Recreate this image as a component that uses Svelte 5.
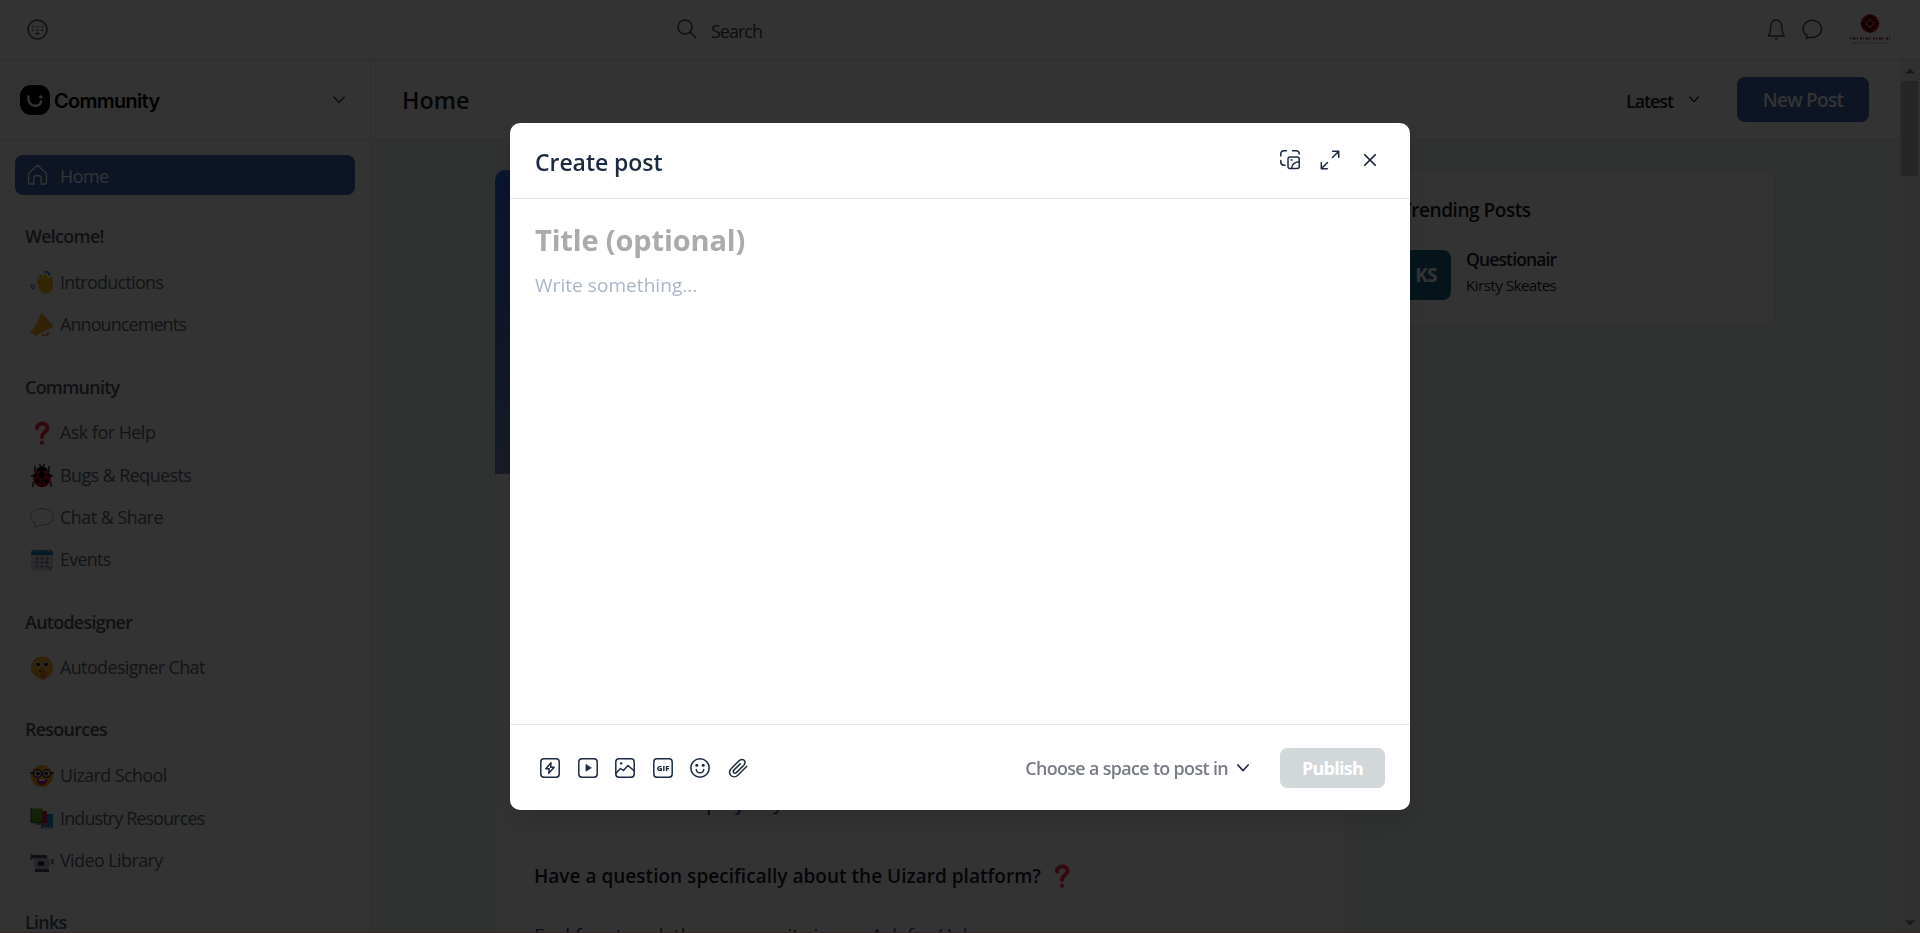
<script>
  // Each item: icon, label, tracking in px
  const sections = [
    { title: 'Welcome!', items: [['wave', 'Introductions', -0.68], ['horn', 'Announcements', -0.86]] },
    { title: 'Community', items: [['question', 'Ask for Help', -0.5], ['bug', 'Bugs & Requests', -0.55], ['bubble', 'Chat & Share', -0.5], ['calendar', 'Events', -0.7]] },
    { title: 'Autodesigner', items: [['shush', 'Autodesigner Chat', -0.59]] },
    { title: 'Resources', items: [['nerd', 'Uizard School', -0.58], ['books', 'Industry Resources', -0.84], ['camera', 'Video Library', -0.55]] },
    { title: 'Links', items: [] }
  ];
  const tools = ['bolt', 'play', 'image', 'gif', 'smile', 'clip'];
</script>

{#snippet emoji(name)}
  <svg class="emoji" viewBox="0 0 24 24">
    {#if name === 'wave'}
      <g stroke="#f9c21b" stroke-width="3.300" stroke-linecap="round"><path d="M14.500 14 8.500 8.500M16 12l-5.500-7M18 11l-3-6.500M13 16l-5-4.500" /></g>
      <path d="M9 13.500 18 9l1.500-3c1-2 3-1 3 .5l.5 9c0 4.500-3.500 7-7.500 7-3.500 0-5.500-2.500-7.500-6z" fill="#f9c21b" />
      <path d="M14 1.200c2.500-.5 4.500 1 5 3.500M15 .2c3-.2 5 2 5 4M.8 13c-.5 2.500 1.500 5 4 5M3 13c0 1.800 1 3 2.800 3" fill="none" stroke="#3f6fd0" stroke-width="1.100" />
    {:else if name === 'horn'}
      <path d="M11 1q1-1 2 0L23 12.500q.5 1-.5 1.700L7 22l-1 1.500L1 19.500q-1-1 0-2L4 15.500z" fill="#f9a825" />
      <path d="M12 20.500c1 3.500 7 2 6-2" fill="none" stroke="#d9822b" stroke-width="1.700" />
    {:else if name === 'question'}
      <path d="M7 7.500c0-6.500 10.500-6.500 10.500-.5 0 4-5.500 4-5.500 9" fill="none" stroke="#f92f3c" stroke-width="4" stroke-linecap="round" />
      <circle cx="12" cy="21.700" r="2.100" fill="#f92f3c" />
    {:else if name === 'bug'}
      <path d="M5 2v5l2 3M19 2v5l-2 3M1 12h5M23 12h-5M3 23v-4l3-3M21 23v-4l-3-3M9.500 0l1.500 3M14.500 0 13 3" fill="none" stroke="#080808" stroke-width="1.300" />
      <ellipse cx="12" cy="14" rx="9" ry="9.200" fill="#ca0b2b" />
      <path d="M6 7c1-6 11-6 12 0z" fill="#080808" />
      <path d="M12 6v17" stroke="#080808" />
      <circle cx="12" cy="11" r="3" /><circle cx="7.500" cy="17" r="2.200" /><circle cx="16.500" cy="17" r="2.200" /><circle cx="5" cy="11" r="1.600" /><circle cx="19" cy="11" r="1.600" />
    {:else if name === 'bubble'}
      <path d="M12 2.500c6.500 0 11.500 3.800 11.500 8.300S18.500 19 12 19c-1.700 0-3 1.500-7.500 2 1-1.500 1-2.500.5-4C2 15.500.5 13.200.5 10.800.5 6.300 5.500 2.500 12 2.500z" fill="none" stroke="#9a96a8" stroke-width="1" />
    {:else if name === 'calendar'}
      <path d="M1 6h22v13l-4 4H4q-3 0-3-3z" fill="#ddd6e6" />
      <path d="M1 7V5q0-3 3-3h16q3 0 3 3v2z" fill="#1988c8" />
      <path d="M5 1v3M9.500 1v3M14.500 1v3M19 1v3" stroke="#bdb6c8" stroke-width="1.200" />
      <path d="M5.500 10.500h3M10.500 10.500h3M15.500 10.500h3M5.500 14.500h3M10.500 14.500h3M5.500 18.500h3M10.500 18.500h3M15.500 18.500h3" stroke="#8a819c" stroke-width="1.900" />
      <path d="M15.500 14.500h3" stroke="#1988c8" stroke-width="2.500" />
      <path d="M19 23v-4h4z" fill="#8a819c" />
    {:else if name === 'shush'}
      <circle cx="12" cy="11.500" r="11" fill="#f7a823" />
      <circle cx="8" cy="8.500" r="3" fill="#eee" /><circle cx="16" cy="8.500" r="3" fill="#eee" />
      <circle cx="8" cy="8.500" r="2.100" fill="#382028" /><circle cx="16" cy="8.500" r="2.100" fill="#382028" />
      <path d="M9 15.500h6" stroke="#382028" stroke-width="1.500" />
      <path d="M12.200 12q1.800 0 1.800 3l3.500 4-2 4.500h-4.500l-1-4 1-3z" fill="#e97a2c" />
    {:else if name === 'nerd'}
      <circle cx="12" cy="12" r="11" fill="#f7a823" />
      <path d="M6.500 15h11q-.5 6-5.500 6t-5.500-6z" fill="#bb1d80" /><path d="M9 15h6v2H9z" fill="#eee" />
      <g stroke="#2b2028" stroke-width="1.300"><circle cx="7.500" cy="9.500" r="3.900" fill="#eee" /><circle cx="16.500" cy="9.500" r="3.900" fill="#eee" /><path d="M0 9h3.500M20.500 9H24" /></g>
      <circle cx="7.800" cy="9.500" r="2" fill="#2b2028" /><circle cx="16.200" cy="9.500" r="2" fill="#2b2028" />
    {:else if name === 'books'}
      <path d="M11 7h12v13l-1 2H11z" fill="#1a8fc8" /><path d="M12 20h10.500v2H12z" fill="#c8c4d4" />
      <path d="M5 4h12v12H5z" fill="#c8174e" /><path d="M6 16h11v2H6z" fill="#c86f8a" />
      <path d="M1 1.500h11.500V15H1z" fill="#5da81c" /><path d="M1.500 15.500h11M1.200 1.500V16" stroke="#2e6b3e" stroke-width="1.400" />
    {:else if name === 'camera'}
      <path d="M4 8h13l3 3v6l-3 3H5z" fill="#bdb9c8" />
      <path d="M1.500 5v6M22.500 10v5" stroke="#6a6384" stroke-width="2" /><path d="M2 7.500h15M5 21.500h14" stroke="#514a70" stroke-width="2.800" />
      <path d="M8 12.500h6v4H8z" fill="#28222e" />
    {/if}
  </svg>
{/snippet}

{#snippet tool(name)}
  <svg class="tool" viewBox="0 0 20 20">
    {#if name !== 'smile' && name !== 'clip'}<rect x=".8" y=".8" width="18.400" height="18.400" rx="3.200" />{/if}
    {#if name === 'bolt'}
      <path d="M11 4.800 5.800 10.700h3.400L8.800 15.200l5.300-6h-3.500z" />
    {:else if name === 'play'}
      <path d="M8 6.800v6.400l5-3.200z" class="solid" />
    {:else if name === 'image'}
      <path d="M1 15.200 5.500 10.500 8.500 12.500 13 7.500 19 12.800" /><circle cx="6.200" cy="5.400" r="1.200" class="solid dot" />
    {:else if name === 'gif'}
      <text x="10.100" y="12.700" text-anchor="middle">GIF</text>
    {:else if name === 'smile'}
      <circle cx="10" cy="10" r="9.200" /><path d="M6.300 11.500c.4 4.400 7 4.400 7.400 0" /><circle cx="6.800" cy="7.300" r="1.500" class="solid dot" /><circle cx="13.200" cy="7.300" r="1.500" class="solid dot" />
    {:else}
      <path d="M18.800 8.300 9.800 17.200c-2 2-5 2.100-6.900.3-1.900-1.900-1.800-4.800.2-6.800l8.100-8.100c1.500-1.500 3.600-1.600 4.900-.3s1.200 3.400-.3 4.900l-7.200 7.200c-.9.9-2 1-2.800.3-.7-.8-.6-1.900.3-2.800l6.200-6.200" />
    {/if}
  </svg>
{/snippet}

<div class="app">
  <header class="topbar">
    <svg class="globe" viewBox="0 0 20 20"><circle cx="10" cy="10" r="9" /><path d="M4.700 7.500h1.600M9.200 7.500h1.600M13.700 7.500h1.600M4.700 10.700h1.600M9.200 10.700h1.600M13.700 10.700h1.600M8 13.800h4" /></svg>
    <div class="search">
      <svg viewBox="0 0 20 20"><circle cx="8" cy="8" r="7" /><path d="m13 13 6 6" /></svg>
      <span>Search</span>
    </div>
    <div class="actions">
      <svg viewBox="0 0 20 20"><path d="M2.500 15.500c1.500-1.500 2-3 2-7.500 0-4.500 2.500-7 5.500-7s5.500 2.500 5.500 7c0 4.500.5 6 2 7.500.6.700.2 1-.5 1H3c-.7 0-1.100-.3-.5-1z" /><path d="M8.500 19.200h3" stroke-width="1.500" /></svg>
      <svg viewBox="0 0 20 20"><path d="M4.500 19 4.800 16C2.500 14.500 1 12.200 1 9.700 1 5 5 1.200 10 1.200S19 5 19 9.700s-4 8.300-9 8.300c-1 0-1.800-.1-2.600-.3z" /></svg>
      <svg class="avatar" viewBox="0 0 40 40">
        <rect x=".5" y=".5" width="39" height="39" rx="7" fill="none" stroke="#f4f4f4" />
        <circle cx="20" cy="13.500" r="9.300" fill="#b51a1e" />
        <path d="m20 5.500 8 8-8 8-8-8zM15 8.500l10 10M25 8.500l-10 10M20 4.500v18M11 13.500h18" fill="none" stroke="#4d0000" stroke-width="1.200" />
        <path d="M20 9.500l4 4-4 4-4-4z" fill="none" stroke="#f0a0a0" stroke-width=".9" />
        <path d="M0 28.500h40" stroke="#8f2c2c" stroke-width="2" stroke-dasharray="1 1.500 3 1 1 2.500 2 1" />
        <path d="M2 33h36" stroke="#c99c9c" stroke-width="1.500" stroke-dasharray="1.500 1" />
      </svg>
    </div>
  </header>

  <div class="body">
    <aside>
      <div class="brand">
        <svg class="mark" viewBox="0 0 30 30"><rect width="30" height="30" rx="11" /><path d="M8.500 11.500v2.500c0 8.500 12.500 8.500 12.500 2.500" fill="none" stroke="#fff" stroke-width="2.500" stroke-linecap="round" /><circle cx="20.800" cy="12" r="1.700" fill="#fff" /></svg>
        <span>Community</span>
        <svg class="chev" viewBox="0 0 12 8"><path d="m.8 1 5.200 5.500L11.200 1" /></svg>
      </div>
      <nav>
        <div class="home">
          <svg viewBox="0 0 20 20"><path d="M1.500 8.800 10 1.200l8.500 7.600v8.700q0 1.500-1.500 1.500h-3.500v-5.500q0-2.500-3.500-2.500t-3.500 2.500V19H3q-1.500 0-1.500-1.500z" /></svg>
          <span>Home</span>
        </div>
        {#each sections as s}
          <section>
            <h3>{s.title}</h3>
            {#each s.items as [icon, label, tracking]}
              <div class="item">{@render emoji(icon)}<span style="letter-spacing: {tracking}px">{label}</span></div>
            {/each}
          </section>
        {/each}
      </nav>
    </aside>

    <main>
      <div class="page-head">
        <h1>Home</h1>
        <span class="latest">Latest</span>
        <svg class="chev small" viewBox="0 0 12 8"><path d="m.8 1 5.200 5.500L11.200 1" /></svg>
        <button class="new">New Post</button>
      </div>
      <div class="columns">
        <article class="feed">
          <div class="banner"></div>
          <div class="post">
            <p class="share"><b>project</b> you</p>
            <h2><span>Have a question specifically about the Uizard platform?</span>{@render emoji('question')}</h2>
            <p class="help">Feel free to ask the community in our <a href="#help">Ask for Help</a></p>
          </div>
        </article>
        <div class="trending">
          <h2>Trending Posts</h2>
          <div class="entry">
            <div class="ks">KS</div>
            <div><div class="q">Questionair</div><div class="by">Kirsty Skeates</div></div>
          </div>
        </div>
      </div>
    </main>
    <div class="scroll">
      <svg viewBox="0 0 10 6"><path d="M0 5.500 5 .5l5 5z" /></svg>
      <div class="thumb"></div>
      <svg viewBox="0 0 10 6"><path d="M0 .5 5 5.500l5-5z" /></svg>
    </div>
  </div>
</div>

<div class="overlay">
  <div class="modal">
    <div class="modal-head">
      <h2>Create post</h2>
      <svg class="m1" viewBox="0 0 20 20"><path d="M.8 6V4Q.8.800 4 .8h2.500M12.500.8H16q3.200 0 3.200 3.200M.8 10.500V12q0 3.200 3.200 3.200h1" /><rect x="8" y="7" width="11.200" height="11.500" rx="2" /><path d="M11.500 18.300c.5-4 3-6 7.500-6.500" /><path d="M11 10h1" /></svg>
      <svg class="m2" viewBox="0 0 20 20"><path d="M12.500 7.500 18.500 1.500M12.700 1.200h6v6M7.500 12.500 1.500 18.500M1.300 12.700v6h6" /></svg>
      <svg class="m3" viewBox="0 0 12 12"><path d="m.6.600 10.800 10.800M11.400.6.600 11.400" /></svg>
    </div>
    <div class="editor">
      <div class="title">Title (optional)</div>
      <div class="write">Write something...</div>
    </div>
    <div class="modal-foot">
      <div class="tools">{#each tools as t}{@render tool(t)}{/each}</div>
      <span class="choose">Choose a space to post in</span>
      <svg class="chev dark" viewBox="0 0 12 8"><path d="m.8 1 5.200 5.500L11.200 1" /></svg>
      <button class="publish">Publish</button>
    </div>
  </div>
  <div class="edge"></div>
</div>

<style>
  :global(body) { margin: 0; overflow: hidden; background: #fff; }
  * { box-sizing: border-box; }
  h1, h2, h3, p { margin: 0; font-weight: 600; }
  button { border: 0; font-family: inherit; padding: 0; }
  svg { fill: none; stroke: currentColor; stroke-width: 1.3; flex: none; }
  .app, .overlay { font-family: "Open Sans", sans-serif; white-space: nowrap; }
  .app { height: 933px; display: flex; flex-direction: column; overflow: hidden; color: #10141c; }

  .topbar { height: 60px; border-bottom: 1px solid #dfe2e6; display: flex; align-items: center; color: #44484f; padding: 0 30px 0 27px; }
  .globe { width: 21px; height: 21px; margin-bottom: 1px; stroke-width: 1.4; }
  .search { width: 600px; height: 40px; margin-left: 612px; border: 1px solid #eceef0; border-radius: 9px; display: flex; align-items: center; padding-left: 16px; gap: 14px; font-size: 17.9px; }
  .search svg { width: 20px; height: 20px; stroke-width: 1.5; margin-bottom: 1px; }
  .search span { letter-spacing: -.95px; padding-top: 3px; }
  .actions { margin-left: auto; display: flex; align-items: center; gap: 16px; }
  .actions svg { width: 20.500px; height: 20.500px; stroke-width: 1.4; }
  .actions .avatar { width: 40px; height: 40px; margin-left: 11.500px; stroke: none; }

  .body { flex: 1; display: flex; min-height: 0; }
  aside { width: 371px; border-right: 1px solid #e4e7eb; overflow: hidden; color: #62666e; flex: none; }
  .brand { height: 80px; border-bottom: 1px solid #e0e3e6; display: flex; align-items: center; padding: 0 25px 0 20px; color: #000; }
  .mark { width: 30px; height: 30px; fill: #000; stroke: none; }
  .brand span { font: 600 20px Inter, sans-serif; letter-spacing: -.72px; margin-left: 4px; padding-top: 3px; }
  .chev { width: 12px; height: 8px; stroke-width: 1.500; stroke-linecap: round; }
  .brand .chev { margin-left: auto; color: #444850; }
  nav { padding: 15px; }
  .home { height: 40px; background: #4267b4; color: #fff; border-radius: 8px; display: flex; align-items: center; padding-left: 12px; gap: 12px; font-size: 17.900px; margin-bottom: 1.250px; }
  .home svg { width: 21px; height: 21px; margin-bottom: 1px; }
  .home span { padding-top: 1px; letter-spacing: -.5px; }
  section { padding: 16px 0 0 10px; }
  h3 { height: 49.500px; line-height: 48.500px; font-size: 17.900px; color: #505560; letter-spacing: -.7px; }
  .item { height: 42.400px; display: flex; align-items: center; gap: 6px; padding-left: 5px; font-size: 17.900px; }
  .item span { padding-bottom: 2px; }
  .emoji { width: 24px; height: 24px; stroke: none; }
  .emoji circle:not([fill]) { fill: #080808; }

  main { flex: 1; background: #f0f8f6; min-width: 0; display: flex; flex-direction: column; }
  .page-head { height: 80px; flex: none; background: #fff; border-bottom: 1px solid #dfe5e5; display: flex; align-items: center; padding: 0 31px; }
  h1 { font-size: 23.300px; letter-spacing: 0; padding-top: 1px; color: #191f2c; margin-right: auto; }
  .latest { font-size: 17.900px; font-weight: 600; padding-top: 2px; letter-spacing: -1.050px; color: #222; }
  .chev.small { width: 10px; height: 7px; margin: 0 38px 1px 16px; }
  .new { width: 132px; height: 45px; border-radius: 8px; background: #4065b5; color: #fff; font-size: 19px; font-weight: 600; letter-spacing: -.75px; }
  .columns { flex: 1; display: flex; gap: 30px; padding: 30px 0 0 124px; align-items: flex-start; min-height: 0; }
  .feed { width: 851px; height: 763px; border-radius: 10px 10px 0 0; overflow: hidden; }
  .banner { height: 304px; background: linear-gradient(#3068e8, #4a72c8 50%, #7088b8); }
  .post { height: 459px; background: #fff; border: 1px solid #e9eceb; border-width: 0 1px; padding: 316px 38px 0; font-size: 19px; }
  .share { line-height: 26px; padding-left: 172px; font-weight: 400; }
  .share b { color: #2f4ea8; font-weight: 600; letter-spacing: -.35px; }
  .post h2 { font-size: 19px; line-height: 28px; margin-top: 46px; color: #1a2030; display: flex; align-items: center; gap: 9px; letter-spacing: .02px; }
  .help { font-weight: 400; line-height: 28px; margin-top: 31px; color: #30343c; letter-spacing: .05px; }
  .help a { color: #34488c; text-decoration: none; }
  .trending { width: 399px; height: 156px; background: #fff; border: 1px solid #e0e5e4; border-radius: 10px; padding: 25px 24px; }
  .trending h2 { font-size: 19px; line-height: 28px; letter-spacing: -.45px; color: #1c1c1c; }
  .entry { display: flex; gap: 16px; margin-top: 26px; line-height: 25px; }
  .ks { width: 50px; height: 50px; border-radius: 8px; background: #1c6286; color: #fff; font-size: 19px; font-weight: 700; line-height: 51px; text-align: center; letter-spacing: -.7px; }
  .q { font-size: 17.500px; font-weight: 600; margin: -3px 0 1px -1px; color: #1c2028; letter-spacing: -.85px; }
  .by { font-size: 15.300px; color: #23262c; letter-spacing: -.6px; margin-left: -1px; }
  .scroll { width: 20px; background: #f1f1f1; display: flex; flex-direction: column; align-items: center; padding: 8px 2px 7px 1px; }
  .scroll svg { width: 10px; height: 6px; fill: #777; stroke: none; }
  .thumb { width: 17px; height: 95px; background: #bdbdbd; margin: 7px 0 auto; }

  .overlay { position: fixed; inset: 0; background: rgba(0, 0, 0, .8); display: flex; align-items: center; justify-content: center; color: #1c2a40; }
  .edge { position: absolute; left: 0; right: 0; bottom: 0; height: 1px; background: #3c2428; }
  .modal { width: 900px; height: 687px; border-radius: 10px; background: #fff; display: flex; flex-direction: column; box-shadow: 0 12px 30px rgba(0, 0, 0, .12); }
  .modal-head { height: 76px; border-bottom: 1px solid #e4e7ef; display: flex; align-items: center; padding: 0 34px 0 25px; }
  .modal-head h2 { font-size: 23px; letter-spacing: -.05px; padding-top: 3px; margin-right: auto; }
  .modal-head svg { stroke-width: 1.500; stroke-linecap: round; stroke-linejoin: round; margin-bottom: 1px; }
  .m1 { width: 20px; height: 20px; }
  .m2 { width: 20px; height: 20px; margin: 0 24px 0 20px; }
  .m3 { width: 12px; height: 12px; }
  .editor { flex: 1; padding: 19px 25px; }
  .title { font-size: 29px; font-weight: 700; line-height: 44px; color: #a9abac; letter-spacing: -.15px; }
  .write { font-size: 19px; line-height: 28px; margin-top: 9px; color: #aab6c8; letter-spacing: .06px; }
  .modal-foot { height: 86px; border-top: 1px solid #e4e7ee; display: flex; align-items: center; padding: 0 25px 0 30px; }
  .tools { display: flex; gap: 17.600px; margin-right: auto; }
  .tool { width: 20px; height: 20px; stroke-width: 1.500; stroke-linejoin: round; stroke-linecap: round; }
  .tool .solid { fill: currentColor; stroke-width: .8; }
  .tool .dot { stroke: none; }
  .tool text { font: 800 7.700px "Open Sans", sans-serif; fill: currentColor; stroke: none; }
  .choose { font-size: 17.900px; font-weight: 600; color: #777b84; letter-spacing: -.64px; }
  .chev.dark { margin: 0 31px 0 9px; stroke-width: 1.700; }
  .publish { width: 105px; height: 40px; border-radius: 7px; background: #d2d7da; color: #fff; font-size: 17.900px; font-weight: 700; letter-spacing: -.7px; }
</style>
